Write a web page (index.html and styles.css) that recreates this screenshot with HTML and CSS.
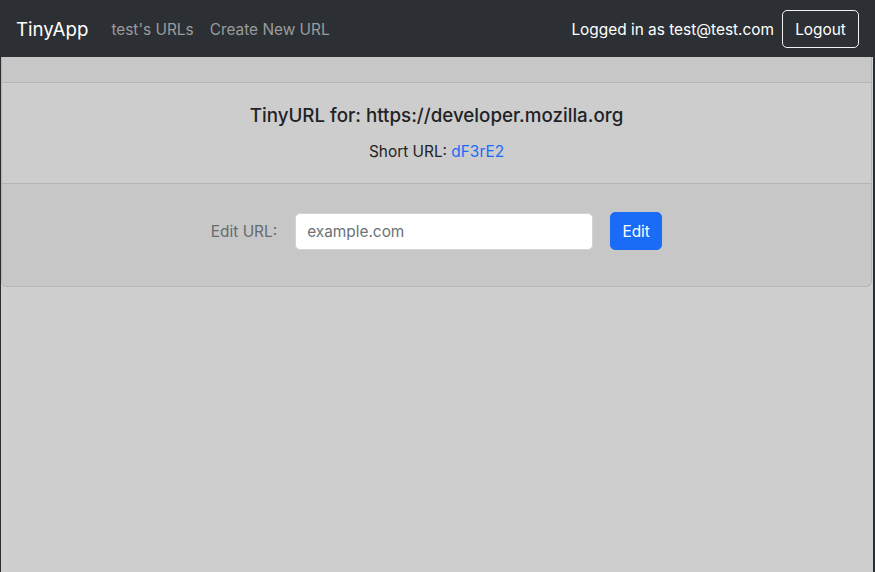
FILE: index.html
```html
<!DOCTYPE html>
<html lang="en">
<head>
<meta charset="utf-8">
<title>TinyApp</title>
<link rel="stylesheet" href="styles.css">
</head>
<body>
<nav class="navbar">
  <a class="brand" href="#">TinyApp</a>
  <div class="nav-links">
    <a class="nav-link" href="#">test's URLs</a>
    <a class="nav-link" href="#">Create New URL</a>
  </div>
  <div class="nav-right">
    <span class="user">Logged in as test@test.com</span>
    <button class="btn-logout" type="button">Logout</button>
  </div>
</nav>
<main class="card">
  <div class="card-header"></div>
  <div class="card-body">
    <h5 class="card-title">TinyURL for: https://developer.mozilla.org</h5>
    <p class="card-text">Short URL: <a class="short" href="#">dF3rE2</a></p>
  </div>
  <div class="card-footer">
    <form class="edit-form">
      <label class="edit-label" for="longURL">Edit URL:</label>
      <input class="edit-input" id="longURL" type="text" placeholder="example.com">
      <button class="btn-edit" type="submit">Edit</button>
    </form>
  </div>
</main>
</body>
</html>
```
FILE: styles.css
```css
* { box-sizing: border-box; }
html { background: #2a2d31; }
body {
  margin: 0;
  min-height: 572px;
  background: #cfcfcf;
  border-left: 1px solid #2a2d31;
  border-top: 1px solid #2a2d31;
  border-right: 2px solid #2a2d31;
  font-family: "Inter", "Liberation Sans", sans-serif;
  font-size: 15.4px;
  color: #1f2326;
}
.navbar {
  height: 56px;
  background: #2c3034;
  display: flex;
  align-items: center;
  padding: 0 14px 0 15px;
}
.brand {
  font-size: 18.7px;
  color: #ffffff;
  text-decoration: none;
  margin-right: 15px;
}
.nav-links { display: flex; }
.nav-link {
  color: #999b9d;
  text-decoration: none;
  padding: 8px;
}
.nav-right {
  margin-left: auto;
  display: flex;
  align-items: center;
  gap: 8px;
}
.user { color: #ffffff; }
.btn-logout {
  font-family: inherit;
  font-size: 15.4px;
  color: #ffffff;
  background: transparent;
  border: 1px solid #f2f2f2;
  border-radius: 5px;
  height: 38px;
  width: 77px;
  padding: 0;
}
.card {
  display: block;
  border: 1px solid #b4b4b4;
  border-top: 0;
  border-radius: 0 0 6px 6px;
  margin-right: 1px;
}
.card-header {
  height: 26px;
  background: #c7c7c7;
  border-bottom: 1px solid #b4b4b4;
}
.card-body {
  background: #cdcdcd;
  padding: 21px 16px 19px;
  text-align: center;
}
.card-title {
  margin: 0 0 12px;
  font-size: 18.75px;
  font-weight: 500;
  line-height: 24px;
}
.card-text {
  margin: 0;
  line-height: 24px;
}
.short { color: #1a6cf6; text-decoration: none; }
.card-footer {
  background: #c7c7c7;
  border-top: 1px solid #b4b4b4;
  padding: 28px 16px 36px;
  border-radius: 0 0 6px 6px;
}
.edit-form {
  display: flex;
  justify-content: center;
  align-items: center;
}
.edit-label {
  color: #656b71;
  margin-right: 18px;
}
.edit-input {
  width: 298px;
  height: 37px;
  border: 1px solid #d2d4d6;
  border-radius: 5px;
  background: #ffffff;
  font-family: inherit;
  font-size: 15.4px;
  padding: 0 11px;
  margin-right: 17px;
}
.edit-input::placeholder { color: #6b7177; }
.btn-edit {
  font-family: inherit;
  font-size: 15.4px;
  color: #ffffff;
  background: #1a6cf6;
  border: 1px solid #1a6cf6;
  border-radius: 5px;
  height: 38px;
  width: 52px;
  padding: 0;
}
```
